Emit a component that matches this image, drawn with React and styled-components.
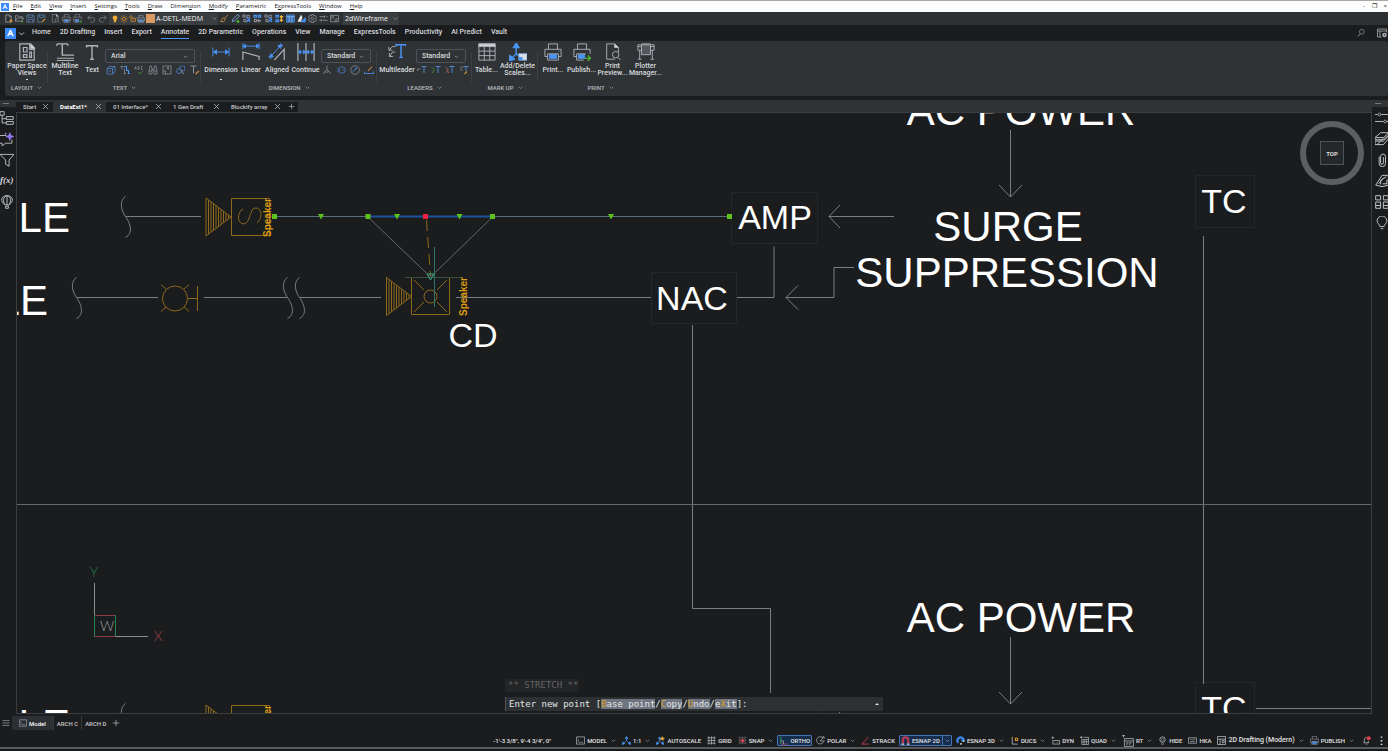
import React from 'react';
import styled, { createGlobalStyle } from 'styled-components';

const BLUE = '#4a94f5';
const GREY = '#a9adb3';

const menus = ['File', 'Edit', 'View', 'Insert', 'Settings', 'Tools', 'Draw', 'Dimension', 'Modify', 'Parametric', 'ExpressTools', 'Window', 'Help'];

// index of the underlined letter, when it is not the first one
const accelerators = { Dimension: 5, ExpressTools: 1 };

const ribbonTabs = ['Home', '2D Drafting', 'Insert', 'Export', 'Annotate', '2D Parametric', 'Operations', 'View', 'Manage', 'ExpressTools', 'Productivity', 'AI Predict', 'Vault'];

const docTabs = [
    { name: 'Start', width: 37 },
    { name: 'DataExt1*', width: 53, active: true },
    { name: '01 Interface*', width: 60 },
    { name: '1 Gen Draft', width: 58 },
    { name: 'Blockify array', width: 61 },
];

/* every icon is drawn on a 20 x 20 grid */
const icons = {
    logo: <><rect width="20" height="20" fill="#3b8bfa" stroke="none" /><path d="M10 4L5 15M10 4l5 11M7 12l3-2 3 2" stroke="#fff" strokeWidth="2.4" /></>,
    chevron: <path d="M3 7l7 7 7-7" strokeWidth="2.4" />,
    close: <path d="M3 3l14 14M17 3L3 17" strokeWidth="2" />,
    plus: <path d="M10 2v16M2 10h16" strokeWidth="2" />,
    burger: <path d="M1 4h18M1 10h18M1 16h18" strokeWidth="1.6" />,
    newFile: <><path d="M4 2h8l4 4v12H4zM12 2v4h4" strokeWidth="1.6" /><path d="M12 15h7M15.5 11v8" stroke="#e09a3c" strokeWidth="2.4" /></>,
    open: <><path d="M1 16V4h6l2 2h7v3M1 16l4-7h14l-4 7z" strokeWidth="1.4" /><path d="M13 17h5" stroke="#56ad3d" strokeWidth="2.4" /></>,
    save: <><path d="M2 2h14l2 2v14H2zM6 2v6h8V2" stroke="#5d87bb" strokeWidth="1.6" /><path d="M6 18v-6h9v6" stroke="#5d87bb" strokeWidth="1.6" /></>,
    saveAs: <><path d="M2 2h14l2 2v5M2 2v16h8M6 2v6h8V2" stroke="#5d87bb" strokeWidth="1.6" /><path d="M11 18l7-7" stroke="#d99a4a" strokeWidth="2.6" /></>,
    preview: <><path d="M12 18H3V1h9l4 4v5M12 1v4h4" /><circle cx="13" cy="13" r="3.6" /><path d="M15.5 16l3 3" /><path d="M12 1l4 4h-4z" fill="#d7dade" /></>,
    print: <><path d="M5 7V1h10v6M4 15H1V7h18v8h-3" /><rect x="6" y="13" width="8" height="4" fill={BLUE} stroke={BLUE} /><path d="M4 12h12v7H4z" /><path d="M16 9.5h1" stroke={BLUE} /></>,
    publish: <><path d="M5 7V1h10v6M4 15H1V7h18v5" /><rect x="6" y="13" width="7" height="4" fill={BLUE} stroke={BLUE} /><path d="M12 19H4v-7h10" /><path d="M13 17h6M16.5 14l3 3-3 3" stroke="#4fb52e" strokeWidth="1.5" /></>,
    undo: <path d="M7 3L2 8l5 5M2 8h10a5 5 0 010 10H8" strokeWidth="1.6" />,
    redo: <path d="M13 3l5 5-5 5M18 8H8a5 5 0 000 10h4" strokeWidth="1.6" />,
    bulbOn: <><circle cx="10" cy="7" r="6" fill="#f3ae35" stroke="none" /><path d="M7 12h6v6H7z" fill="#f3ae35" stroke="none" /></>,
    sun: <g stroke="#d28d2d"><circle cx="10" cy="10" r="4.5" strokeWidth="2.4" /><path d="M10 0v3M10 17v3M0 10h3M17 10h3M3 3l2 2M15 15l2 2M17 3l-2 2M5 15l-2 2" strokeWidth="1.8" /></g>,
    lock: <g stroke="#d28d2d"><rect x="6" y="9" width="12" height="9" strokeWidth="2.2" /><path d="M2 9V5q0-3 3-3t4 3v4M12 12v3" strokeWidth="2.2" /></g>,
    brush: <path d="M18 2l-8 7-3-1-6 9h7l4-5-2-3" stroke="#d1923f" strokeWidth="1.8" />,
    pen: <><path d="M15 1l4 4L8 15l-5 2 1-5z" stroke="#7db0df" strokeWidth="2" /><path d="M12 17h7M15.5 13v7" stroke="#45b535" strokeWidth="3" /></>,
    layersCfg: <><path d="M2 2h5v5H2zM11 3h6v5h-6zM4 12h5v5H4z" strokeWidth="1.6" /><path d="M10 6l8 12M18 10l-8 8" stroke={BLUE} strokeWidth="2.4" /></>,
    layersSel: <><path d="M2 3h6v4H2zM12 3h5v4h-5z" stroke={BLUE} strokeWidth="2.4" /><path d="M3 12h5v5H3zM13 11v8M9 15h9" strokeWidth="2" /></>,
    layersOn: <><path d="M2 3h6v4H2zM2 13h6v4H2z" stroke={BLUE} strokeWidth="2.6" /><path d="M14 3v14M11 6h7M11 14h7" stroke="#f0b338" strokeWidth="3" /></>,
    tableFill: <><rect x="1" y="2" width="18" height="16" fill="#316cb8" stroke="#77aeee" /><path d="M1 6h18M7 6v12M13 6v12" stroke="#a5cbf5" strokeWidth="1.5" /></>,
    scaleTag: <><path d="M1 17L9 1l3 7-3 9z" fill="#e6e8ea" stroke="none" /><path d="M9 18l10-11v11z" fill={BLUE} stroke={BLUE} /></>,
    gear: <><circle cx="10" cy="10" r="3" strokeWidth="1.5" /><path d="M8 1h4l1 3 3-1 3 4-2 3 2 3-3 4-3-1-1 3H8l-1-3-3 1-3-4 2-3-2-3 3-4 3 1z" strokeWidth="1.5" /></>,
    slidersSmall: <path d="M1 6h11M16 6h3M12 3v6M1 14h3M8 14h11M5 11v6" strokeWidth="1.6" />,
    viewSm: <path d="M1 3h18v14H1zM4 6h5M4 6v5M15 14h-4M15 14V9M7 9l5 4" strokeWidth="1.4" />,
    paperSpace: <><path d="M2 1h12l4 4v14H2zM13 1v6h5" strokeWidth="1.3" /><path d="M6 5h4v5H6zM6 13h4v3H6zM13 10h2v6h-2z" strokeWidth="1.3" /><path d="M14 1v5h5z" fill="#d7dade" /></>,
    mtext: <><path d="M1 1h12M7 1v13M1 3V1M13 3V1" strokeWidth="1.6" /><path d="M7 13.500h13M1 17h19M1 19.500h19" strokeWidth="1.2" /></>,
    textT: <path d="M4 5V3h12v2M10 3v15M8 18h4" strokeWidth="1.5" />,
    dimension: <path d="M1 5v10M19 5v10M1 10h18M5 7.5L2 10l3 2.5zM15 7.5l3 2.500-3 2.500z" stroke={BLUE} fill={BLUE} />,
    linear: <><path d="M1 0v7M19 0v7M1 3.5h18M4 1.5l-3 2 3 2zM16 1.5l3 2-3 2z" stroke={BLUE} fill={BLUE} /><path d="M1 19v-9l18 5v4" strokeWidth="1.3" /></>,
    aligned: <><path d="M0 14l4 4M13 0l4 4M2 16L15 2M2 16l1-4 3 3zM15 2l-4 1 3 3z" stroke={BLUE} fill={BLUE} /><path d="M7 19L18 7v12" strokeWidth="1.3" /></>,
    continueDim: <><path d="M1 0v20M10 0v20M19 0v20" strokeWidth="1.3" /><path d="M1 10h18M4 8l-3 2 3 2zM7 8l3 2-3 2zM13 8l-3 2 3 2zM16 8l3 2-3 2z" stroke={BLUE} fill={BLUE} strokeWidth="0.8" /></>,
    multileader: <><path d="M9 4V2h11v2M14.5 2v14M12.5 16h4" stroke={BLUE} strokeWidth="1.6" /><path d="M8 4H5L1 8M1 4.5V8h4M8 10H5l-3 5M1.5 11v4h4" /></>,
    table: <><path d="M1 1h18v18H1zM1 9h18M1 14h18M7 4v15M13 4v15" /><rect x="1" y="1" width="18" height="3" fill="#cfd2d8" /></>,
    scales: <><path d="M8 2v10M8 12l-6 6M8 12l6 4M8 0L5 5h6zM0 20l1-6 5 4z" stroke={BLUE} fill={BLUE} strokeWidth="1.6" /><rect x="11" y="12" width="9" height="7" fill="#dde1e6" stroke="#8fb7ee" /><path d="M11 15.5h4V19h-4z" fill={BLUE} stroke="none" /></>,
    plotter: <><path d="M5 2h10v11H5z" fill="#55585c" /><path d="M5 1h10M5 8H1V2h4M15 8h4V2h-4M1 4h4M15 4h4M3 8v10M17 8v10M1 18h4M15 18h4" /></>,
    box3d: <path d="M2 7h11v11H2zM2 7l4-4h12v11l-5 4M13 7l5-4M5 12h5" stroke="#5286cb" strokeWidth="1.6" />,
    textAlign: <><path d="M1 3h6M4 3v6M9 8v9M7 17h5" stroke="#858b95" strokeWidth="1.6" /><path d="M8 3h5v8h4v6h3" stroke={BLUE} strokeWidth="2.2" /></>,
    abc: <><path d="M1 9l2-6 2 6M2 7h3M8 3v6h2q2-1 0-3 2-2 0-3zM18 3h-3v6h3" stroke="#9ca0a7" /><path d="M9 14l3 4 6-6" stroke="#4c9245" strokeWidth="1.6" /></>,
    find: <path d="M2 18h6V8l-1-6H4L2 12zM18 18h-6V8l1-6h3l2 10zM8 9h4M2 12h6M12 12h6" strokeWidth="1.5" />,
    fit: <path d="M2 2h16v16H2zM2 12h5v6M9 9l4-4M10 5h3v4" strokeWidth="1.5" />,
    balloon3: <><path d="M8 2h9v9H8z" stroke={BLUE} /><circle cx="6" cy="12" r="5" stroke="#5286cb" strokeWidth="1.5" /><path d="M11 11l4 7" strokeWidth="2" /></>,
    textEdit: <><path d="M1 2h12M7 2v15" strokeWidth="2" /><path d="M11 18l7-6" stroke="#c4893d" strokeWidth="2.5" /></>,
    angular: <path d="M10 1v8L2 18M10 9l8 9M5 12l4 3 5-3" strokeWidth="1.6" />,
    radiusDim: <><circle cx="12" cy="10" r="6.5" stroke="#4b7dbf" strokeWidth="1.6" /><path d="M1 6l6 4-6 4M12 10h5" stroke={BLUE} /></>,
    diameter: <><circle cx="10" cy="10" r="8.5" strokeWidth="1.5" /><path d="M5 14l9-8M14 6l-4 1" stroke={BLUE} strokeWidth="1.5" /></>,
    ordinate: <><path d="M1 17h18M1 13v5M19 13v5" stroke={BLUE} strokeWidth="1.6" /><path d="M8 12l8-9" stroke="#c4893d" strokeWidth="2.2" /></>,
    leaderA: <><path d="M9 3h10M14 3v13" stroke="#5286cb" strokeWidth="2" /><path d="M1 8h6M1 8v4" strokeWidth="1.4" /></>,
    leaderAdd: <><path d="M9 3h10M14 3v13" stroke="#5286cb" strokeWidth="2" /><path d="M1 4l6 6-5 6" stroke="#4c9245" strokeWidth="1.6" /></>,
    leaderDel: <><path d="M9 3h10M14 3v13" stroke="#5286cb" strokeWidth="2" /><path d="M1 4l6 4-5 8" /><path d="M3 9l5 7" stroke="#c34d4d" strokeWidth="2" /></>,
    leaderEdit: <><path d="M9 3h10M14 3v9" stroke="#5286cb" strokeWidth="2" /><path d="M1 4h7l-6 6h6" /><path d="M11 18l5-5" stroke="#c4893d" strokeWidth="2.5" /></>,
    search: <><circle cx="12" cy="7" r="6" strokeWidth="1.5" /><path d="M8 12l-6 7" strokeWidth="1.8" /></>,
    panels: <><path d="M1 2h18v7M1 2v16h8M1 6h18M6 6v12" strokeWidth="1.6" /><circle cx="15" cy="14" r="3" strokeWidth="3" /></>,
    structure: <path d="M0 1h6v5H0zM3 6v11h6M3 11h6M9 8h10v4H9zM9 15h10v4H9z" strokeWidth="1.3" />,
    assistant: <><path d="M9 5H0M0 16h3v4l5-4h9v-5" strokeWidth="1.3" /><path d="M14 1l1.5 4 4 1.5-4 1.5-1.5 4-1.5-4-4-1.5 4-1.500z" fill="#8a6bf0" stroke="#a78bfa" /><path d="M8 1v3M6.5 2.5h3" stroke="#a78bfa" /></>,
    filter: <path d="M0 2h20l-7 8v9l-5-3v-6z" strokeWidth="1.3" />,
    balloon: <path d="M7 14C0 9 1 1 10 1s10 8 3 13zM7 14c-3-5-3-12 3-13M13 14c3-5 3-12-3-13M10 1v13M8 16h4v3H8z" strokeWidth="1.3" />,
    sliders: <><path d="M0 5h4M9 5h11M0 15h12M17 15h3" strokeWidth="1.3" /><circle cx="6.5" cy="5" r="2" /><circle cx="14.5" cy="15" r="2" /></>,
    layers: <path d="M0 8L8 1h12l-8 7zM0 8v3h12l8-7M0 13h12l8-8M0 13v5h12l8-9V4M3 18l9-9" strokeWidth="1.4" />,
    clip: <path d="M6 5v10a4.5 4.5 0 009 0V5a3.5 3.5 0 00-7 0v9a2 2 0 004 0V6" strokeWidth="1.4" />,
    materials: <path d="M1 16L10 2h9v14q-9 4-18 0zM5 14l8-9M8 15V9l8-5M11 14h6V8" strokeWidth="1.4" />,
    blocks: <path d="M1 1h7v6H1zM12 1h7v6h-7zM1 10h7v9H1zM12 10h7v9h-7zM1 15h7M12 15h7" strokeWidth="1.4" />,
    bulb: <path d="M7 15C7 12 3 11 3 7a7 7 0 0114 0c0 4-4 5-4 8zM8 18h4" strokeWidth="1.3" />,
    model: <><path d="M1 2h18v16H1z" strokeWidth="1.6" /><path d="M5 6v8M7 14h9" stroke="#7b8087" strokeWidth="2" /></>,
    scale: <path d="M10 2v8M10 10l-7 7M10 10l7 7M10 1L7 6h6zM1 19l1-6 4 4zM19 19l-1-6-4 4z" stroke={BLUE} fill={BLUE} strokeWidth="1.6" />,
    autoscale: <><path d="M8 4v7M8 11l-6 6M8 11l6 6M8 2L5 6h6zM1 19l1-6 4 4zM17 19l-1-6-4 4z" stroke={BLUE} fill={BLUE} strokeWidth="1.6" /><path d="M14 1l1 3 4 1-3 2v3l-3-2-3 1 1-3z" fill="#eeb03c" stroke="#eeb03c" /></>,
    grid: <path d="M4 1v18M10 1v18M16 1v18M1 4h18M1 10h18M1 16h18" strokeWidth="1.6" />,
    snap: <><path d="M4 1v18M10 1v18M16 1v18M1 4h18M1 10h18M1 16h18" stroke="#7d8086" /><rect x="6" y="7" width="8" height="7" fill="#c5404c" stroke="none" /></>,
    ortho: <><path d="M4 1v17" stroke="#43ab52" strokeWidth="1.8" /><path d="M4 18h15" stroke="#c5404c" strokeWidth="1.8" /><path d="M4 11h6v7" strokeWidth="1.6" /></>,
    polar: <><path d="M15 4a8 8 0 102 8" strokeWidth="1.6" /><path d="M9 11h10M9 11l8-8M14 2h4v4" strokeWidth="1.6" /></>,
    strack: <><path d="M2 18L17 2" stroke="#c5404c" strokeWidth="2" /><path d="M2 18h15" stroke="#c5404c" strokeWidth="2" /></>,
    magnet: <><path d="M4 16V9a6 6 0 0112 0v7" stroke="#b93a55" strokeWidth="5" /><path d="M1 18h6M13 18h6" stroke="#d6dade" strokeWidth="2.4" /></>,
    magnet3d: <><path d="M5 15A7 7 0 1117 9l-5 1" stroke="#3c89ec" strokeWidth="5" /><path d="M9 18l4-1M15 12l4-1" stroke="#dbe3ed" strokeWidth="2.5" /></>,
    ducs: <><path d="M5 18V6M5 18h12" strokeWidth="1.8" /><path d="M5 2v4M12 5h5v5h-5z" stroke="#d6952f" strokeWidth="2.4" /></>,
    dyn: <path d="M4 1v6M1 4h6M4 10h15v8H4zM8 14h1M13 14h2" strokeWidth="1.6" />,
    quad: <path d="M3 0v6M0 3h6M4 8h15M8 3h11v16H4V8M4 13h15M9 8v11M14 8v11" strokeWidth="1.6" />,
    rt: <path d="M0 1h5M2.5 0v4M4 6h15v13H4zM4 10h15M8 13v4M8 13h3M13 13v4M13 13h3" strokeWidth="1.3" />,
    pin: <><circle cx="10" cy="8" r="6" strokeWidth="1.8" /><circle cx="10" cy="8" r="2.5" /><path d="M8 15h4v4H8z" /></>,
    keyboard: <path d="M1 4h18v12H1zM4 8h2M8 8h2M12 8h4M5 12h10" strokeWidth="1.6" />,
    workspace: <path d="M1 1h18v18H1zM1 7h18M7 7v12M12 10h4v5h-4z" strokeWidth="1.8" />,
    bell: <><path d="M3 15h13M5 15V9q0-5 5-6M14 15v-4M8 18h4" strokeWidth="1.8" /><circle cx="15" cy="5" r="4.5" fill="#d8414b" stroke="none" /></>,
    dots: <path d="M10 1v3M10 9v3M10 17v3" strokeWidth="3.5" />,
};

function Icon({ name, size = 8, color = GREY }) {
    return (
        <Glyph width={size} height={size} viewBox="0 0 20 20" fill="none" stroke={color} aria-hidden="true">
            {icons[name]}
        </Glyph>
    );
}

const statusItems = [
    { icon: 'model', label: 'MODEL', more: true },
    { icon: 'scale', label: '1:1', more: true },
    { icon: 'autoscale', label: 'AUTOSCALE' },
    { icon: 'grid', label: 'GRID' },
    { icon: 'snap', label: 'SNAP', more: true },
    { icon: 'ortho', label: 'ORTHO', on: true },
    { icon: 'polar', label: 'POLAR', more: true },
    { icon: 'strack', label: 'STRACK' },
    { icon: 'magnet', label: 'ESNAP 2D', on: true, more: true },
    { icon: 'magnet3d', label: 'ESNAP 3D', more: true },
    { icon: 'ducs', label: 'DUCS', more: true },
    { icon: 'dyn', label: 'DYN' },
    { icon: 'quad', label: 'QUAD', more: true },
    { icon: 'rt', label: 'RT', more: true, size: 12 },
    { icon: 'pin', label: 'HIDE' },
    { icon: 'keyboard', label: 'HKA' },
    { icon: 'workspace', label: '2D Drafting (Modern)', more: true, large: true },
    { icon: 'print', label: 'PUBLISH', more: true },
];

function BigTool({ icon, lines, width, more }) {
    return (
        <ToolButton $width={width}>
            <Icon name={icon} size={18} color="#b1b5bb" />
            <ToolLabel>
                {lines.map((line) => <span key={line}>{line}</span>)}
            </ToolLabel>
            {more && <MoreDot />}
        </ToolButton>
    );
}

function Group({ title, width, children }) {
    return (
        <GroupBox $width={width}>
            <GroupTools>{children}</GroupTools>
            <GroupTitle>
                {title} <Icon name="chevron" size={5} />
            </GroupTitle>
        </GroupBox>
    );
}

function Picker({ label, value, width }) {
    return (
        <PickerBox $width={width}>
            <select aria-label={label} defaultValue={value}>
                <option>{value}</option>
            </select>
            <Icon name="chevron" size={5} />
        </PickerBox>
    );
}

function SmallTools({ names }) {
    return (
        <SmallRow>
            {names.map((name) => (
                <IconButton key={name} aria-label={name}>
                    <Icon name={name} size={10} color="#8e939b" />
                </IconButton>
            ))}
        </SmallRow>
    );
}

function Ribbon() {
    return (
        <RibbonPanel>
            <Group title="LAYOUT" width={43}>
                <BigTool icon="paperSpace" lines={['Paper Space', 'Views']} width={40} more />
            </Group>
            <Group title="TEXT" width={153}>
                <BigTool icon="mtext" lines={['Multiline', 'Text']} width={30} />
                <BigTool icon="textT" lines={['Text']} width={24} />
                <Stack>
                    <Picker label="Text style" value="Arial" width={90} />
                    <SmallTools names={['box3d', 'textAlign', 'abc', 'find', 'fit', 'balloon3', 'textEdit']} />
                </Stack>
            </Group>
            <Group title="DIMENSION" width={176}>
                <BigTool icon="dimension" lines={['Dimension']} width={36} more />
                <BigTool icon="linear" lines={['Linear']} width={24} />
                <BigTool icon="aligned" lines={['Aligned']} width={28} />
                <BigTool icon="continueDim" lines={['Continue']} width={29} />
                <Stack>
                    <Picker label="Dimension style" value="Standard" width={50} />
                    <SmallTools names={['angular', 'radiusDim', 'diameter', 'ordinate']} />
                </Stack>
            </Group>
            <Group title="LEADERS" width={95}>
                <BigTool icon="multileader" lines={['Multileader']} width={36} />
                <Stack>
                    <Picker label="Leader style" value="Standard" width={50} />
                    <SmallTools names={['leaderA', 'leaderAdd', 'leaderDel', 'leaderEdit']} />
                </Stack>
            </Group>
            <Group title="MARK UP" width={66}>
                <BigTool icon="table" lines={['Table...']} width={25} />
                <BigTool icon="scales" lines={['Add/Delete', 'Scales...']} width={37} />
            </Group>
            <Group title="PRINT" width={125}>
                <BigTool icon="print" lines={['Print...']} width={26} />
                <BigTool icon="publish" lines={['Publish...']} width={31} />
                <BigTool icon="preview" lines={['Print', 'Preview...']} width={31} />
                <BigTool icon="plotter" lines={['Plotter', 'Manager...']} width={35} />
            </Group>
        </RibbonPanel>
    );
}

function Hatch({ x, y }) {
    const lines = [];
    for (let i = 0; i < 10; i += 1) {
        const h = 19 - i * 1.9;
        lines.push(`M${x + i * 2.5} ${y - h}v${h * 2}`);
    }
    return <path d={`${lines.join('')}M${x} ${y - 19}l25 19-25 19`} stroke="#8c691b" />;
}

function Break({ x, y }) {
    return <path d={`M${x} ${y - 20}c-6 4-5 13 0 20s8 17 0 21`} />;
}

// one run of the riser: it is repeated further down the sheet
function Riser() {
    return (
        <>
            <g stroke="#7b7d80">
                <Break x={125.5} y={216.5} />
                <path d="M126 216.5h75M1010.5 130v67M999 185l11.5 12 11.5-12M894 216.5h-65M840 205l-11 11.5 11 11.5" />
            </g>
            <Hatch x={206} y={217} />
            <path d="M231.5 198.5h38v37h-38zM243 209c-6 3-6 14 0 15 8 0 6-15 12-16 7-1 8 10 2 15" stroke="#8c691b" />
            <g stroke="#242628">
                <rect x="731.5" y="192.5" width="86" height="51" />
                <rect x="1195.5" y="175.5" width="59" height="52" />
            </g>
            <BigText x="70" y="232" textAnchor="end">CABLE</BigText>
            <BigText x="1021" y="125" textAnchor="middle">AC POWER</BigText>
            <MidText x="775" y="229" textAnchor="middle">AMP</MidText>
            <MidText x="1224" y="213" textAnchor="middle">TC</MidText>
            <SpeakerText transform="translate(271 237) rotate(-90)">Speaker</SpeakerText>
        </>
    );
}

function Drawing() {
    return (
        <Sheet viewBox="17 113 1354 600" preserveAspectRatio="xMinYMin slice" fill="none" role="img" aria-label="Riser diagram">
            <Riser />
            <g transform="translate(0 507)"><Riser /></g>

            <g stroke="#7b7d80">
                <Break x={76.5} y={297.5} />
                <Break x={287.5} y={297.5} />
                <Break x={299.5} y={297.5} />
                <path d="M77 297.5h81M204 297.5h83M300 297.5h81M456 297.5h195M737 297.5h37v-51" />
                <path d="M854 267.5h-20v30h-48M798 285.5l-12 12 12 12" />
                <path d="M692.5 325v283.5h78V693M1203.5 236v448M1256 708.5h116" />
                <path d="M368 217l62.5 60 62-60" stroke="#66686b" />
                <path d="M16 504.5h1356" stroke="#67696b" />
            </g>

            <g stroke="#8c691b">
                <circle cx="175" cy="298.5" r="12.5" />
                <path d="M188 298.5h10M197.5 286v25M166 289l-5-4.5M184 289l5-4.5M166 307l-5 4.5M184 307l5 4.5" />
                <path d="M411.5 277.5h38v37h-38zM414 280l10 10M447 280l-10 10M414 312l10-10M447 312l-10-10" />
                <circle cx="430.5" cy="296.5" r="6.5" />
                <path d="M426.5 220l4 56" strokeDasharray="11 6" />
            </g>
            <Hatch x={386.5} y={296.5} />

            <path d="M275 216.5h93M493 216.5h237" stroke="#57707c" />
            <path d="M368 216.5h125" stroke="#1d539c" strokeWidth="2" />
            <path d="M405 277.5h58" stroke="#37533d" />
            <path d="M434.5 247v60" stroke="#2f7468" />
            <path d="M427 274h7l-3.5 6z" stroke="#3aa77f" />
            <path d="M272 214h5v5h-5zM365.5 214h5v5h-5zM490 214h5v5h-5zM727 214h5v5h-5z" fill="#5cc21c" />
            <path d="M318 214h6l-3 5.5zM394 214h6l-3 5.5zM456.5 214h6l-3 5.5zM608 214h6l-3 5.5z" fill="#5cc21c" />
            <path d="M423 214h5v5h-5z" fill="#f0203c" />

            <rect x="651.5" y="272.5" width="85" height="51" stroke="#242628" />
            <BigText x="48" y="315" textAnchor="end">CABLE</BigText>
            <BigText x="1008" y="241" textAnchor="middle">SURGE</BigText>
            <BigText x="1007" y="287" textAnchor="middle">SUPPRESSION</BigText>
            <MidText x="692" y="310" textAnchor="middle">NAC</MidText>
            <MidText x="473" y="347" textAnchor="middle">CD</MidText>
            <SpeakerText transform="translate(467 316) rotate(-90)">Speaker</SpeakerText>

            <path d="M94.5 583v53.5H148" stroke="#8a8c8e" />
            <path d="M94.5 615.5h21M94.5 636.5h21" stroke="#8a3d45" />
            <path d="M94.5 615v21M115.5 615v21" stroke="#218253" />
            <AxisText x="94" y="577" textAnchor="middle" fill="#218253">Y</AxisText>
            <AxisText x="158" y="641" textAnchor="middle" fill="#a04450">X</AxisText>
            <AxisText x="107" y="631" textAnchor="middle" fill="#9da0a3">W</AxisText>
        </Sheet>
    );
}

function CommandLine() {
    return (
        <Command>
            <History>** STRETCH **</History>
            <Prompt>
                <label htmlFor="cmd">
                    Enter new point [<Key><b>B</b>ase point</Key>/<Key><b>C</b>opy</Key>/<Key><b>U</b>ndo</Key>/<Key>e<b>X</b>it</Key>]:
                </label>
                <input id="cmd" autoComplete="off" />
                <IconButton aria-label="Command history"><UpMark /></IconButton>
            </Prompt>
        </Command>
    );
}

function StatusBar() {
    return (
        <Status>
            <Coords>-1'-3 3/8", 9'-4 3/4", 0"</Coords>
            {statusItems.map(({ icon, label, more, on, size = 9, large }) => (
                <StatusButton key={label} $on={on} $large={large}>
                    <Icon name={icon} size={size} color="#b5b9be" />
                    <span>{label}</span>
                    {more && <StatusMore $on={on}><Icon name="chevron" size={5} /></StatusMore>}
                </StatusButton>
            ))}
            <StatusEnd>
                <IconButton aria-label="Notifications"><Icon name="bell" size={9} /></IconButton>
                <IconButton aria-label="Customize"><Icon name="dots" size={9} color="#e3e5e7" /></IconButton>
            </StatusEnd>
        </Status>
    );
}

function App() {
    return (
        <>
            <GlobalStyle />
            <Window>
                <MenuBar>
                    <Icon name="logo" size={8} />
                    {menus.map((m) => {
                        const at = accelerators[m] || 0;
                        return (
                            <MenuButton key={m}>{m.slice(0, at)}<u>{m[at]}</u>{m.slice(at + 1)}</MenuButton>
                        );
                    })}
                    <WindowButtons>
                        <button aria-label="Minimize">-</button>
                        <button aria-label="Restore">❐</button>
                        <button aria-label="Close">×</button>
                    </WindowButtons>
                </MenuBar>

                <QuickBar>
                    {['newFile', 'open', 'save', 'saveAs'].map((n) => <QuickButton key={n} aria-label={n}><Icon name={n} size={9} /></QuickButton>)}
                    <QuickGap />
                    {['preview', 'print', 'publish'].map((n) => <QuickButton key={n} aria-label={n}><Icon name={n} size={9} /></QuickButton>)}
                    <QuickGap />
                    {['undo', 'redo'].map((n) => <QuickButton key={n} aria-label={n}><Icon name={n} size={9} color="#858a90" /></QuickButton>)}
                    <LayerBox>
                        <Icon name="bulbOn" size={8} />
                        <Icon name="sun" size={8} />
                        <Icon name="lock" size={7} />
                        <Icon name="print" size={8} color="#c7d8ec" />
                        <Swatch />
                        <select aria-label="Layer" defaultValue="A-DETL-MEDM">
                            <option>A-DETL-MEDM</option>
                        </select>
                        <Icon name="chevron" size={5} />
                    </LayerBox>
                    {['brush', 'pen', 'layersCfg', 'layersSel', 'layersCfg', 'layersOn', 'tableFill', 'scaleTag', 'gear', 'slidersSmall', 'viewSm'].map((n, i) => (
                        <QuickButton key={n + i} aria-label={n}><Icon name={n} size={9} /></QuickButton>
                    ))}
                    <StyleBox>
                        <select aria-label="Visual style" defaultValue="2dWireframe">
                            <option>2dWireframe</option>
                        </select>
                        <Icon name="chevron" size={5} />
                    </StyleBox>
                </QuickBar>

                <RibbonTabs>
                    <AppMenu>
                        <IconButton aria-label="Application menu"><Icon name="logo" size={11} /></IconButton>
                        <IconButton aria-label="More"><Icon name="chevron" size={7} color="#d8dadd" /></IconButton>
                    </AppMenu>
                    {ribbonTabs.map((t) => <RibbonTab key={t} $active={t === 'Annotate'}>{t}</RibbonTab>)}
                    <TabTools>
                        <IconButton aria-label="Search"><Icon name="search" size={8} /></IconButton>
                        <IconButton aria-label="Panels"><Icon name="panels" size={10} /></IconButton>
                    </TabTools>
                </RibbonTabs>

                <Ribbon />

                <Workspace>
                    <Rail>
                        <RailTop />
                        {['structure', 'assistant', 'filter'].map((n) => <RailButton key={n} aria-label={n}><Icon name={n} size={14} color="#c1c4c8" /></RailButton>)}
                        <RailButton aria-label="Parameters"><i>f(x)</i></RailButton>
                        <RailButton aria-label="Tips"><Icon name="balloon" size={14} color="#c1c4c8" /></RailButton>
                    </Rail>
                    <Center>
                        <DocTabs>
                            {docTabs.map((t) => (
                                <DocTab key={t.name} $width={t.width} $active={t.active}>
                                    <button>{t.name}</button>
                                    <button aria-label={`Close ${t.name}`}><Icon name="close" size={7} color="#c9cbce" /></button>
                                </DocTab>
                            ))}
                            <DocTab $width={13}>
                                <button aria-label="New tab"><Icon name="plus" size={7} /></button>
                            </DocTab>
                        </DocTabs>
                        <Canvas>
                            <Drawing />
                            <Compass><button>TOP</button></Compass>
                            <CommandLine />
                        </Canvas>
                    </Center>
                    <Rail $right>
                        <RailTop />
                        {['sliders', 'layers', 'clip', 'materials', 'blocks', 'bulb'].map((n) => (
                            <RailButton key={n} aria-label={n}><Icon name={n} size={14} color="#c1c4c8" /></RailButton>
                        ))}
                    </Rail>
                </Workspace>

                <LayoutTabs>
                    <IconButton aria-label="Layouts"><Icon name="burger" size={8} /></IconButton>
                    <LayoutTab $active><Icon name="model" size={8} /> Model</LayoutTab>
                    <LayoutTab>ARCH C</LayoutTab>
                    <LayoutTab>ARCH D</LayoutTab>
                    <IconButton aria-label="Add layout"><Icon name="plus" size={8} /></IconButton>
                </LayoutTabs>
                <StatusBar />
            </Window>
        </>
    );
}

const GlobalStyle = createGlobalStyle`
    *{
        box-sizing: border-box;
    }

    body{
        margin: 0;
        background: #1b1c1e;
        color: #d9dbde;
        font-family: Roboto, "Liberation Sans", sans-serif;
        font-size: 7px;
        line-height: 9px;
    }

    button, select, input{
        margin: 0;
        padding: 0;
        border: 0;
        background: none;
        color: inherit;
        font: inherit;
        white-space: nowrap;
    }

    select{
        appearance: none;
        flex: 1;
        min-width: 0;
    }
`;

const Glyph = styled.svg`
    flex: none;
`;

const Window = styled.div`
    min-height: 100vh;
    display: flex;
    flex-direction: column;
    overflow: hidden;
`;

const IconButton = styled.button`
    display: flex;
    align-items: center;
    justify-content: center;
    flex: none;
`;

const MenuBar = styled.nav`
    height: 12px;
    display: flex;
    align-items: center;
    gap: 8px;
    padding-left: 1px;
    background: #fdfdfd;
    border-top: 1px solid #aaa7a8;
    color: #1c1c1e;
    font-family: "Open Sans", "Noto Sans", sans-serif;
    font-size: 6px;

    > svg{
        margin-right: -4px;
    }
`;

const MenuButton = styled.button`
    u{
        text-underline-offset: 1px;
    }
`;

const WindowButtons = styled.div`
    display: flex;
    gap: 7px;
    margin-left: auto;
    padding-right: 1px;
`;

const QuickBar = styled.div`
    height: 13px;
    display: flex;
    align-items: center;
    gap: 2px;
    padding-left: 4px;
    background: #2e3134;
    font-family: "Open Sans", "Noto Sans", sans-serif;
`;

const QuickButton = styled(IconButton)`
    width: 9px;
    height: 11px;
`;

const QuickGap = styled.span`
    width: 1px;
`;

const LayerBox = styled.div`
    display: flex;
    align-items: center;
    gap: 1px;
    width: 109px;
    height: 12px;
    padding: 0 1px 0 2px;
    background: #3b3e41;
    color: #f1f2f3;
`;

const StyleBox = styled(LayerBox)`
    width: 56px;
    margin-left: 2px;
`;

const Swatch = styled.span`
    width: 9px;
    height: 9px;
    background: #dc9a63;
`;

const RibbonTabs = styled.nav`
    height: 16px;
    display: flex;
    align-items: center;
    gap: 9px;
    padding: 0 1px 0 5px;
`;

const AppMenu = styled.div`
    display: flex;
    gap: 2px;
    width: 18px;
`;

const RibbonTab = styled.button`
    height: 12px;
    font-weight: 500;
    border-bottom: 1px solid ${({ $active }) => ($active ? '#4a94f5' : 'transparent')};
`;

const TabTools = styled.div`
    display: flex;
    gap: 12px;
    margin-left: auto;
`;

const RibbonPanel = styled.section`
    display: flex;
    height: 55px;
    margin: 0 0 4px 5px;
    background: #2f3336;
    border-radius: 3px;
`;

const GroupBox = styled.div`
    display: flex;
    flex-direction: column;
    width: ${({ $width }) => $width}px;
    position: relative;

    &:not(:last-child)::after{
        content: "";
        position: absolute;
        right: 0;
        top: 11px;
        width: 1px;
        height: 30px;
        background: #3c4043;
    }
`;

const GroupTools = styled.div`
    display: flex;
    height: 41px;
    padding: 2px 0 0 2px;
`;

const GroupTitle = styled.div`
    display: flex;
    align-items: center;
    justify-content: center;
    gap: 4px;
    height: 11px;
    font-size: 6px;
    color: #b6b9bd;
    font-weight: 500;
`;

const ToolButton = styled.button`
    display: flex;
    flex-direction: column;
    align-items: center;
    width: ${({ $width }) => $width}px;
    flex: none;
    font-weight: 500;
`;

const ToolLabel = styled.span`
    display: flex;
    flex-direction: column;
    justify-content: center;
    height: 18px;
    line-height: 7px;
`;

const MoreDot = styled.span`
    width: 2px;
    height: 1px;
    background: #d9dbde;
`;

const Stack = styled.div`
    display: flex;
    flex-direction: column;
    gap: 2px;
    padding: 6px 0 0 1px;
`;

const PickerBox = styled.div`
    display: flex;
    align-items: center;
    width: ${({ $width }) => $width}px;
    height: 14px;
    padding: 0 6px 0 5px;
    border: 1px solid #50545a;
    border-radius: 2px;
    font-weight: 500;
`;

const SmallRow = styled.div`
    display: flex;
    gap: 4px;
    padding-left: 1px;
`;

const Workspace = styled.main`
    flex: 1;
    display: flex;
    min-height: 0;
`;

const Rail = styled.aside`
    width: 16px;
    display: flex;
    flex-direction: column;
    overflow: hidden;

    > button{
        padding-left: ${({ $right }) => ($right ? '3px' : '0')};
    }
`;

const RailTop = styled.div`
    height: 7px;
    border: solid #2f3336;
    border-width: 3px 7px 3px 3px;
    background: #74777a;
`;

const RailButton = styled.button`
    display: flex;
    align-items: center;
    height: 21px;
    flex: none;

    i{
        font: italic bold 9px/9px "Liberation Serif", serif;
    }
`;

const Center = styled.div`
    flex: 1;
    min-width: 0;
    display: flex;
    flex-direction: column;
`;

const DocTabs = styled.div`
    display: flex;
    align-items: flex-end;
    height: 12px;
    background: #2f3336;
`;

const DocTab = styled.div`
    display: flex;
    align-items: center;
    justify-content: space-between;
    width: ${({ $width }) => $width}px;
    height: 10px;
    padding: 0 4px 1px 7px;
    font-size: 6px;
    font-weight: ${({ $active }) => ($active ? 700 : 500)};
    color: ${({ $active }) => ($active ? '#fff' : '#c9cbce')};
    background: ${({ $active }) => ($active ? '#2f3336' : '#1b1c1e')};

    button{
        display: flex;
    }

    &:last-child{
        padding: 0 3px 1px;
    }
`;

const Canvas = styled.div`
    flex: 1;
    position: relative;
    min-height: 300px;
    border: 1px solid #3b3d3f;
    overflow: hidden;
`;

const Sheet = styled.svg`
    position: absolute;
    inset: 0;
    width: 100%;
    height: 100%;
    font-family: "Liberation Sans", Arial, sans-serif;
`;

const BigText = styled.text`
    font-size: 42px;
    fill: #fff;
`;

const MidText = styled.text`
    font-size: 34px;
    fill: #fff;
`;

const SpeakerText = styled.text`
    font-size: 10px;
    font-weight: bold;
    fill: #dd9c12;
`;

const AxisText = styled.text`
    font-family: Lato, sans-serif;
    font-size: 14px;
    font-weight: 300;
`;

const Compass = styled.div`
    position: absolute;
    top: 8px;
    right: 7px;
    width: 64px;
    height: 64px;
    display: flex;
    align-items: center;
    justify-content: center;
    border: 6px solid #5c5e61;
    border-radius: 50%;

    button{
        width: 24px;
        height: 24px;
        background: #25282a;
        border: 1px solid #505356;
        font-weight: 700;
        font-size: 6px;
    }
`;

const Command = styled.div`
    position: absolute;
    left: 50%;
    bottom: 2px;
    width: 378px;
    transform: translateX(-50%);
    font-family: "DejaVu Sans Mono", monospace;
    font-size: 9px;
    line-height: 13px;
`;

const History = styled.div`
    width: fit-content;
    margin-bottom: 5px;
    padding: 0 1px 0 3px;
    background: #222426;
    color: #626568;
`;

const Prompt = styled.div`
    display: flex;
    align-items: center;
    height: 14px;
    padding: 0 4px 0 3px;
    border-left: 1px solid #505458;
    background: #2d3032;
    color: #e3e5e7;

    label{
        white-space: nowrap;
    }

    input{
        flex: 1;
        min-width: 0;
        outline: 0;
    }
`;

const Key = styled.span`
    background: #6f7580;

    b{
        font-weight: 400;
        color: #d9a129;
    }
`;

const UpMark = styled.span`
    border: solid transparent;
    border-width: 0 2px 2px;
    border-bottom-color: #d9dbde;
`;

const LayoutTabs = styled.nav`
    display: flex;
    align-items: center;
    height: 18px;
    padding: 0 0 0 2px;
    font-size: 6px;
`;

const LayoutTab = styled.button`
    display: flex;
    align-items: center;
    gap: 2px;
    height: 14px;
    padding: 0 3px;
    font-weight: 500;
    border-right: 1px solid #36393c;
    color: ${({ $active }) => ($active ? '#fff' : '#c9cbce')};
    background: ${({ $active }) => ($active ? '#2c2f34' : 'none')};

    &:nth-child(2){
        margin-left: 2px;
        padding: 0 7px;
    }

    &:nth-child(4){
        border: 0;
        margin-right: 3px;
    }
`;

const Status = styled.footer`
    display: flex;
    align-items: center;
    justify-content: flex-end;
    gap: 2px;
    height: 19px;
    padding-right: 2px;
    border-bottom: 2px solid #16171a;
    box-shadow: inset 0 -2px #58595b;
    font-size: 6px;
    font-weight: 500;
    color: #e1e3e5;
`;

const Coords = styled.span`
    margin-right: 21px;
    white-space: nowrap;
`;

const StatusButton = styled.button`
    display: flex;
    align-items: center;
    gap: 2px;
    height: 11px;
    padding: 0 1px;
    font-size: ${({ $large }) => ($large ? 7 : 6)}px;
    border: 1px solid ${({ $on }) => ($on ? '#4574b4' : 'transparent')};
    border-radius: 1px;
    background: ${({ $on }) => ($on ? '#172d4e' : 'none')};
`;

const StatusMore = styled.span`
    display: flex;
    align-items: center;
    height: 9px;
    margin-left: ${({ $on }) => ($on ? 0 : 2)}px;
    padding-left: ${({ $on }) => ($on ? 2 : 0)}px;
    border-left: ${({ $on }) => ($on ? '1px solid #4574b4' : '0')};
`;

const StatusEnd = styled.div`
    display: flex;
    gap: 6px;
    padding-left: 4px;
`;

export default App;
